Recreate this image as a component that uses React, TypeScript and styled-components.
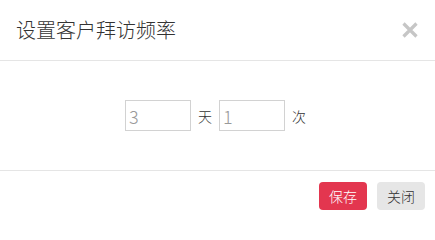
import React from "react";
import styled, { createGlobalStyle } from "styled-components";

const Global = createGlobalStyle`
  html, body { margin: 0; padding: 0; background: #fff; }
  body { font-family: "Noto Sans CJK SC", "Noto Sans", sans-serif; color: #333; }
  * { box-sizing: border-box; }
`;

const Dialog = styled.div`
  width: 435px;
  height: 219px;
  display: flex;
  flex-direction: column;
  background: #fff;
  overflow: hidden;
`;

const Header = styled.div`
  height: 61px;
  display: flex;
  align-items: center;
  justify-content: space-between;
  padding: 0 17px 1px 16px;
  border-bottom: 1px solid #e5e5e5;
`;

const Title = styled.h4`
  margin: 0;
  font-size: 20px;
  font-weight: 300;
  line-height: 1;
  color: #333;
`;

const CloseButton = styled.button`
  border: 0;
  background: none;
  padding: 0;
  width: 16px;
  height: 16px;
  display: flex;
  cursor: pointer;
`;

const Body = styled.div`
  height: 110px;
  display: flex;
  align-items: center;
  justify-content: center;
  gap: 7px;
  border-bottom: 1px solid #e5e5e5;
  padding-right: 4px;
`;

const NumberInput = styled.input`
  width: 66px;
  height: 31px;
  border: 1px solid #d2d2d2;
  padding: 0 3px;
  font-family: "Noto Sans CJK SC", sans-serif;
  font-weight: 300;
  font-size: 18px;
  color: #999;
  outline: none;
  background: #fff;
`;

const Unit = styled.span`
  font-size: 14px;
  font-weight: 300;
  color: #333;
  padding-top: 1px;
`;

const Footer = styled.div`
  flex: 1;
  display: flex;
  justify-content: flex-end;
  align-items: flex-start;
  gap: 10px;
  padding: 11px 10px 0;
`;

const Button = styled.button<{ $primary?: boolean }>`
  height: 28px;
  padding: 0 10px;
  border: 0;
  border-radius: 4px;
  font-family: "Noto Sans CJK SC", sans-serif;
  font-weight: 300;
  font-size: 14px;
  line-height: 28px;
  background: ${(p) => (p.$primary ? "#e3364f" : "#e6e6e6")};
  color: ${(p) => (p.$primary ? "#fff" : "#333")};
  cursor: pointer;
`;

export default function App() {
  return (
    <>
      <Global />
      <Dialog>
        <Header>
          <Title>设置客户拜访频率</Title>
          <CloseButton aria-label="关闭">
            <svg width="16" height="16" viewBox="0 0 16 16">
              <path d="M1.5 1.5 L14.5 14.5 M14.5 1.5 L1.5 14.5" stroke="#c6c6c6" strokeWidth="3.2" strokeLinecap="butt" />
            </svg>
          </CloseButton>
        </Header>
        <Body>
          <NumberInput defaultValue="3" />
          <Unit>天</Unit>
          <NumberInput defaultValue="1" />
          <Unit>次</Unit>
        </Body>
        <Footer>
          <Button $primary>保存</Button>
          <Button>关闭</Button>
        </Footer>
      </Dialog>
    </>
  );
}
